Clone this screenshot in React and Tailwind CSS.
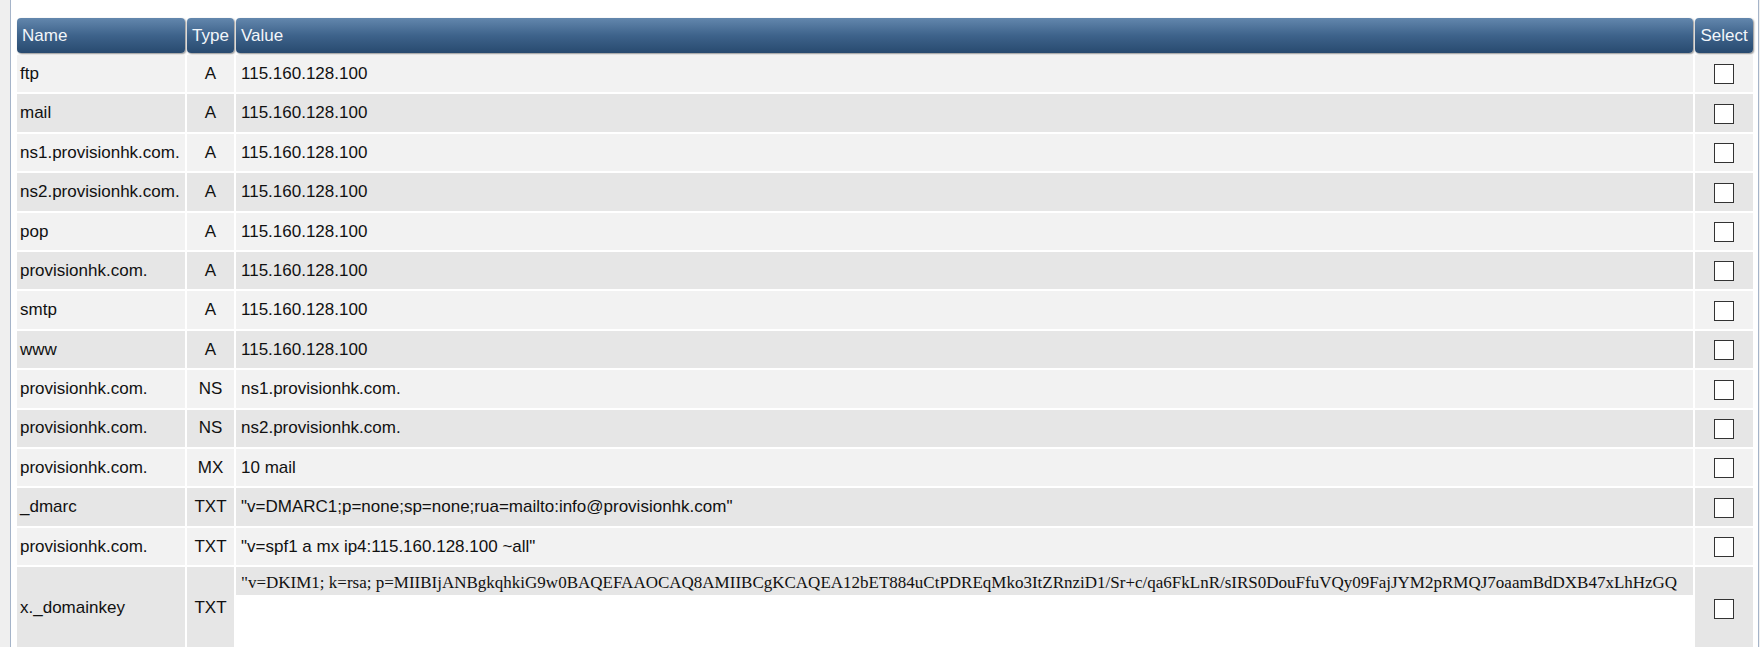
import React from "react";

const records = [
  { name: "ftp", type: "A", value: "115.160.128.100" },
  { name: "mail", type: "A", value: "115.160.128.100" },
  { name: "ns1.provisionhk.com.", type: "A", value: "115.160.128.100" },
  { name: "ns2.provisionhk.com.", type: "A", value: "115.160.128.100" },
  { name: "pop", type: "A", value: "115.160.128.100" },
  { name: "provisionhk.com.", type: "A", value: "115.160.128.100" },
  { name: "smtp", type: "A", value: "115.160.128.100" },
  { name: "www", type: "A", value: "115.160.128.100" },
  { name: "provisionhk.com.", type: "NS", value: "ns1.provisionhk.com." },
  { name: "provisionhk.com.", type: "NS", value: "ns2.provisionhk.com." },
  { name: "provisionhk.com.", type: "MX", value: "10 mail" },
  { name: "_dmarc", type: "TXT", value: '"v=DMARC1;p=none;sp=none;rua=mailto:info@provisionhk.com"' },
  { name: "provisionhk.com.", type: "TXT", value: '"v=spf1 a mx ip4:115.160.128.100 ~all"' },
];

const dkim =
  '"v=DKIM1; k=rsa; p=MIIBIjANBgkqhkiG9w0BAQEFAAOCAQ8AMIIBCgKCAQEA12bET884uCtPDREqMko3ItZRnziD1/Sr+c/qa6FkLnR/sIRS0DouFfuVQy09FajJYM2pRMQJ7oaamBdDXB47xLhHzGQ';

const th =
  "h-[35px] px-[5px] rounded-[4px] font-normal text-[#f2f6fa] bg-linear-to-b from-[#6387ad] via-[#3e638b] to-[#284a6f] shadow-[1px_1px_2px_rgba(0,0,0,0.45)]";

function Check() {
  return (
    <input
      type="checkbox"
      className="appearance-none w-5 h-5 border-[1.5px] border-[#333] bg-white align-middle"
    />
  );
}

export default function App() {
  return (
    <div className="min-h-[647px] bg-[#efefef] font-['Liberation_Sans',Arial,sans-serif] text-[17px] text-[#111]">
      <div className="ml-[10px] w-[1749px] min-h-[647px] border-x border-[#a5b4c9] bg-white pt-[16px] pl-[4px] pr-[2px]">
        <table className="w-[1740px] table-fixed border-separate border-spacing-[2px]">
          <thead>
            <tr>
              <th className={`${th} w-[168px] text-left`}>Name</th>
              <th className={`${th} w-[47px] !px-0 text-center`}>Type</th>
              <th className={`${th} text-left`}>Value</th>
              <th className={`${th} w-[58px] !px-0 text-center`}>Select</th>
            </tr>
          </thead>
          <tbody>
            {records.map((r, i) => {
              const bg = i % 2 === 0 ? "bg-[#f2f2f2]" : "bg-[#e6e6e6]";
              return (
                <tr key={i} className={bg}>
                  <td className="h-[37.4px] px-[3px] whitespace-nowrap">{r.name}</td>
                  <td className="h-[37.4px] text-center">{r.type}</td>
                  <td className="h-[37.4px] pl-[5px] whitespace-nowrap">{r.value}</td>
                  <td className="h-[37.4px] text-center">
                    <Check />
                  </td>
                </tr>
              );
            })}
            {/* DKIM row with the long key */}
            <tr className="bg-[#e6e6e6]">
              <td className="h-[82px] px-[3px]">x._domainkey</td>
              <td className="h-[82px] text-center">TXT</td>
              <td className="h-[82px] p-0 align-top">
                <div className="h-[28px] pl-[5px] pt-[6px] font-['Liberation_Serif','Times_New_Roman',serif] text-[17px] leading-[20px] whitespace-nowrap overflow-hidden">
                  {dkim}
                </div>
                <div className="h-[54px] bg-white" />
              </td>
              <td className="h-[82px] text-center">
                <Check />
              </td>
            </tr>
          </tbody>
        </table>
      </div>
    </div>
  );
}
